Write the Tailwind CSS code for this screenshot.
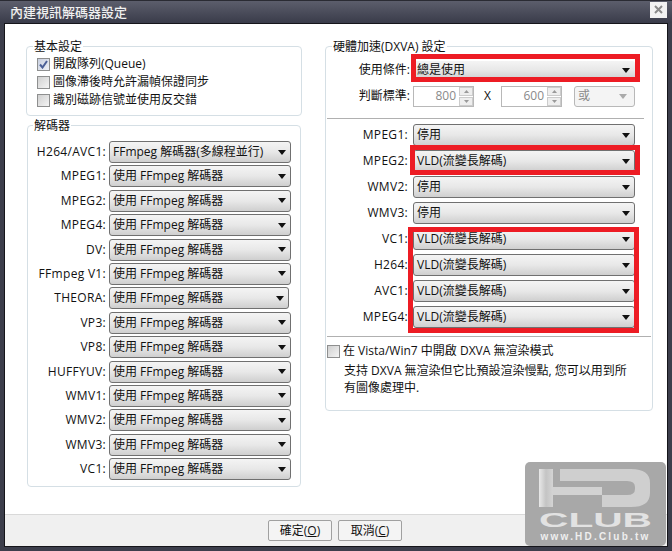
<!DOCTYPE html>
<html><head><meta charset="utf-8">
<script src="https://cdn.jsdelivr.net/npm/@tailwindcss/browser@4"></script>
</head>
<body class="w-[672px] h-[551px] overflow-hidden bg-[#3c3e4b]">
<div class="relative w-[672px] h-[551px] flex flex-col font-['Open_Sans','Noto_Sans_CJK_TC',sans-serif] text-[12px] leading-[16px] text-[#111]">
  <!-- title -->
  <div class="h-[23px] shrink-0 flex items-center justify-between pl-[10px] pr-[5px] bg-gradient-to-b from-[#5c5e6c] to-[#3a3c4a] text-[13px] font-medium text-[#f0f0f0] border-t border-[#2a2b33]">
    <span>內建視訊解碼器設定</span>
    <div class="w-[17px] h-[16px] bg-[#f2f2f2] flex items-center justify-center -mt-[5px]">
      <svg width="9" height="9" viewBox="0 0 9 9"><path d="M1 1l7 7M8 1l-7 7" stroke="#8a8a8a" stroke-width="2"/></svg>
    </div>
  </div>
  <!-- client -->
  <div class="mx-[4px] mb-[4px] flex-1 flex flex-col border border-[#15151a] min-h-0">
    <div class="flex-1 bg-white flex pl-[21px] pt-[14px] gap-[23px] border-b border-[#d9d9d9] min-h-0">
      <!-- left -->
      <div class="w-[276px] flex flex-col gap-[1px]">
        <fieldset class="border border-[#d5dfe5] rounded-[4px] h-[78px] px-[10px] pt-[1px]">
          <legend class="-ml-[4px] px-[1px] text-[12px] translate-y-[1px]">基本設定</legend>
          <div class="flex items-center gap-[3px] h-[18px]"><span class="w-[13px] h-[13px] border border-[#8e8f8f] bg-gradient-to-br from-[#c8cfe0] to-[#eef0f6] flex items-center justify-center"><svg width="9" height="9" viewBox="0 0 9 9"><path d="M1 4.500l2.500 3L8 1" fill="none" stroke="#4a5f97" stroke-width="2"/></svg></span>開啟隊列(Queue)</div>
          <div class="flex items-center gap-[3px] h-[18px]"><span class="w-[13px] h-[13px] border border-[#8e8f8f] bg-gradient-to-br from-[#d0d0d0] to-[#f4f4f4]"></span>圖像滯後時允許漏幀保證同步</div>
          <div class="flex items-center gap-[3px] h-[18px]"><span class="w-[13px] h-[13px] border border-[#8e8f8f] bg-gradient-to-br from-[#d0d0d0] to-[#f4f4f4]"></span>識別磁跡信號並使用反交錯</div>
        </fieldset>
        <fieldset class="border border-[#d5dfe5] rounded-[4px] w-[274px] ml-[1px] h-[370px] pl-[6px]">
          <legend class="-ml-[1px] px-[1px] text-[12px] translate-y-[1px]">解碼器</legend>
          <div class="flex flex-col gap-[2.4px] mt-[8px]">
            <div class="flex items-center h-[22px]"><span class="w-[75px] text-right pr-[3px] whitespace-nowrap tracking-[0.3px]">H264/AVC1:</span><div class="w-[182px] h-[22px] shrink-0 flex items-center justify-between px-[3px] border border-[#707070] rounded-[3px] bg-gradient-to-b from-[#f4f4f4] via-[#e8e8e8] to-[#cfcfcf]"><span>FFmpeg 解碼器(多線程並行)</span><svg width="9" height="5"><path d="M0 0h8l-4 5z" fill="#111"/></svg></div></div>
            <div class="flex items-center h-[22px]"><span class="w-[75px] text-right pr-[3px] whitespace-nowrap tracking-[0.3px]">MPEG1:</span><div class="w-[182px] h-[22px] shrink-0 flex items-center justify-between px-[3px] border border-[#707070] rounded-[3px] bg-gradient-to-b from-[#f4f4f4] via-[#e8e8e8] to-[#cfcfcf]"><span>使用 FFmpeg 解碼器</span><svg width="9" height="5"><path d="M0 0h8l-4 5z" fill="#111"/></svg></div></div>
            <div class="flex items-center h-[22px]"><span class="w-[75px] text-right pr-[3px] whitespace-nowrap tracking-[0.3px]">MPEG2:</span><div class="w-[182px] h-[22px] shrink-0 flex items-center justify-between px-[3px] border border-[#707070] rounded-[3px] bg-gradient-to-b from-[#f4f4f4] via-[#e8e8e8] to-[#cfcfcf]"><span>使用 FFmpeg 解碼器</span><svg width="9" height="5"><path d="M0 0h8l-4 5z" fill="#111"/></svg></div></div>
            <div class="flex items-center h-[22px]"><span class="w-[75px] text-right pr-[3px] whitespace-nowrap tracking-[0.3px]">MPEG4:</span><div class="w-[182px] h-[22px] shrink-0 flex items-center justify-between px-[3px] border border-[#707070] rounded-[3px] bg-gradient-to-b from-[#f4f4f4] via-[#e8e8e8] to-[#cfcfcf]"><span>使用 FFmpeg 解碼器</span><svg width="9" height="5"><path d="M0 0h8l-4 5z" fill="#111"/></svg></div></div>
            <div class="flex items-center h-[22px]"><span class="w-[75px] text-right pr-[3px] whitespace-nowrap tracking-[0.3px]">DV:</span><div class="w-[182px] h-[22px] shrink-0 flex items-center justify-between px-[3px] border border-[#707070] rounded-[3px] bg-gradient-to-b from-[#f4f4f4] via-[#e8e8e8] to-[#cfcfcf]"><span>使用 FFmpeg 解碼器</span><svg width="9" height="5"><path d="M0 0h8l-4 5z" fill="#111"/></svg></div></div>
            <div class="flex items-center h-[22px]"><span class="w-[75px] text-right pr-[3px] whitespace-nowrap tracking-[0.3px]">FFmpeg V1:</span><div class="w-[182px] h-[22px] shrink-0 flex items-center justify-between px-[3px] border border-[#707070] rounded-[3px] bg-gradient-to-b from-[#f4f4f4] via-[#e8e8e8] to-[#cfcfcf]"><span>使用 FFmpeg 解碼器</span><svg width="9" height="5"><path d="M0 0h8l-4 5z" fill="#111"/></svg></div></div>
            <div class="flex items-center h-[22px]"><span class="w-[75px] text-right pr-[3px] whitespace-nowrap tracking-[0.3px]">THEORA:</span><div class="w-[180px] h-[22px] shrink-0 flex items-center justify-between px-[3px] border border-[#707070] rounded-[3px] bg-gradient-to-b from-[#f4f4f4] via-[#e8e8e8] to-[#cfcfcf]"><span>使用 FFmpeg 解碼器</span><svg width="9" height="5"><path d="M0 0h8l-4 5z" fill="#111"/></svg></div></div>
            <div class="flex items-center h-[22px]"><span class="w-[75px] text-right pr-[3px] whitespace-nowrap tracking-[0.3px]">VP3:</span><div class="w-[182px] h-[22px] shrink-0 flex items-center justify-between px-[3px] border border-[#707070] rounded-[3px] bg-gradient-to-b from-[#f4f4f4] via-[#e8e8e8] to-[#cfcfcf]"><span>使用 FFmpeg 解碼器</span><svg width="9" height="5"><path d="M0 0h8l-4 5z" fill="#111"/></svg></div></div>
            <div class="flex items-center h-[22px]"><span class="w-[75px] text-right pr-[3px] whitespace-nowrap tracking-[0.3px]">VP8:</span><div class="w-[182px] h-[22px] shrink-0 flex items-center justify-between px-[3px] border border-[#707070] rounded-[3px] bg-gradient-to-b from-[#f4f4f4] via-[#e8e8e8] to-[#cfcfcf]"><span>使用 FFmpeg 解碼器</span><svg width="9" height="5"><path d="M0 0h8l-4 5z" fill="#111"/></svg></div></div>
            <div class="flex items-center h-[22px]"><span class="w-[75px] text-right pr-[3px] whitespace-nowrap tracking-[0.3px]">HUFFYUV:</span><div class="w-[182px] h-[22px] shrink-0 flex items-center justify-between px-[3px] border border-[#707070] rounded-[3px] bg-gradient-to-b from-[#f4f4f4] via-[#e8e8e8] to-[#cfcfcf]"><span>使用 FFmpeg 解碼器</span><svg width="9" height="5"><path d="M0 0h8l-4 5z" fill="#111"/></svg></div></div>
            <div class="flex items-center h-[22px]"><span class="w-[75px] text-right pr-[3px] whitespace-nowrap tracking-[0.3px]">WMV1:</span><div class="w-[182px] h-[22px] shrink-0 flex items-center justify-between px-[3px] border border-[#707070] rounded-[3px] bg-gradient-to-b from-[#f4f4f4] via-[#e8e8e8] to-[#cfcfcf]"><span>使用 FFmpeg 解碼器</span><svg width="9" height="5"><path d="M0 0h8l-4 5z" fill="#111"/></svg></div></div>
            <div class="flex items-center h-[22px]"><span class="w-[75px] text-right pr-[3px] whitespace-nowrap tracking-[0.3px]">WMV2:</span><div class="w-[182px] h-[22px] shrink-0 flex items-center justify-between px-[3px] border border-[#707070] rounded-[3px] bg-gradient-to-b from-[#f4f4f4] via-[#e8e8e8] to-[#cfcfcf]"><span>使用 FFmpeg 解碼器</span><svg width="9" height="5"><path d="M0 0h8l-4 5z" fill="#111"/></svg></div></div>
            <div class="flex items-center h-[22px]"><span class="w-[75px] text-right pr-[3px] whitespace-nowrap tracking-[0.3px]">WMV3:</span><div class="w-[182px] h-[22px] shrink-0 flex items-center justify-between px-[3px] border border-[#707070] rounded-[3px] bg-gradient-to-b from-[#f4f4f4] via-[#e8e8e8] to-[#cfcfcf]"><span>使用 FFmpeg 解碼器</span><svg width="9" height="5"><path d="M0 0h8l-4 5z" fill="#111"/></svg></div></div>
            <div class="flex items-center h-[22px]"><span class="w-[75px] text-right pr-[3px] whitespace-nowrap tracking-[0.3px]">VC1:</span><div class="w-[182px] h-[22px] shrink-0 flex items-center justify-between px-[3px] border border-[#707070] rounded-[3px] bg-gradient-to-b from-[#f4f4f4] via-[#e8e8e8] to-[#cfcfcf]"><span>使用 FFmpeg 解碼器</span><svg width="9" height="5"><path d="M0 0h8l-4 5z" fill="#111"/></svg></div></div>
          </div>
        </fieldset>
      </div>
      <!-- right -->
      <fieldset class="border border-[#d5dfe5] rounded-[4px] w-[328px] h-[373px] px-[1px]">
        <legend class="ml-[5px] px-[1px] text-[12px] translate-y-[1px]">硬體加速(DXVA) 設定</legend>
        <div class="flex items-center h-[18px] mt-[7px]"><span class="w-[86px] text-right pr-[3px] whitespace-nowrap">使用條件:</span><div class="w-[222px] h-[18px] shrink-0 flex items-center justify-between px-[4px] rounded-[3px] bg-gradient-to-b from-[#f4f4f4] via-[#e8e8e8] to-[#cfcfcf]"><span>總是使用</span><svg width="9" height="5"><path d="M0 0h8l-4 5z" fill="#111"/></svg></div></div>
        <div class="flex items-center h-[22px] mt-[6px]"><span class="w-[86px] text-right pr-[3px] whitespace-nowrap">判斷標準:</span>
          <div class="w-[61px] h-[21px] shrink-0 flex items-center justify-end border border-[#b8b8b8] text-[#8a8a8a]"><span class="mr-[3px]">800</span><div class="w-[14px] h-[19px] flex flex-col gap-[1px]"><div class="flex-1 bg-[#eee] border border-[#ccc] flex items-center justify-center"><svg width="5" height="3"><path d="M0 3h5L2.500 0z" fill="#999"/></svg></div><div class="flex-1 bg-[#eee] border border-[#ccc] flex items-center justify-center"><svg width="5" height="3"><path d="M0 0h5L2.500 3z" fill="#999"/></svg></div></div></div>
          <span class="w-[27px] text-center">X</span>
          <div class="w-[61px] h-[21px] shrink-0 flex items-center justify-end border border-[#b8b8b8] text-[#8a8a8a]"><span class="mr-[3px]">600</span><div class="w-[14px] h-[19px] flex flex-col gap-[1px]"><div class="flex-1 bg-[#eee] border border-[#ccc] flex items-center justify-center"><svg width="5" height="3"><path d="M0 3h5L2.500 0z" fill="#999"/></svg></div><div class="flex-1 bg-[#eee] border border-[#ccc] flex items-center justify-center"><svg width="5" height="3"><path d="M0 0h5L2.500 3z" fill="#999"/></svg></div></div></div>
          <div class="ml-[12px] w-[61px] h-[21px] shrink-0 flex items-center justify-between pl-[3px] pr-[7px] border border-[#b8b8b8] rounded-[3px] bg-[#f4f4f4] text-[#8a8a8a]"><span>或</span><svg width="8" height="5"><path d="M0 0h8l-4 5z" fill="#aaa"/></svg></div>
        </div>
        <div class="h-px bg-[#b0b0b0] mt-[11px] mb-[5px] w-[317px]"></div>
        <div class="flex flex-col gap-[4px]">
          <div class="flex items-center h-[22px]"><span class="w-[86px] text-right pr-[5px] whitespace-nowrap tracking-[0.3px]">MPEG1:</span><div class="w-[222px] h-[22px] shrink-0 flex items-center justify-between px-[3px] border border-[#707070] rounded-[3px] bg-gradient-to-b from-[#f4f4f4] via-[#e8e8e8] to-[#cfcfcf]"><span>停用</span><svg width="9" height="5"><path d="M0 0h8l-4 5z" fill="#111"/></svg></div></div>
          <div class="flex items-center h-[22px]"><span class="w-[86px] text-right pr-[5px] whitespace-nowrap tracking-[0.3px]">MPEG2:</span><div class="w-[222px] h-[22px] shrink-0 flex items-center justify-between px-[3px] border border-[#707070] rounded-[3px] bg-gradient-to-b from-[#f4f4f4] via-[#e8e8e8] to-[#cfcfcf]"><span>VLD(流變長解碼)</span><svg width="9" height="5"><path d="M0 0h8l-4 5z" fill="#111"/></svg></div></div>
          <div class="flex items-center h-[22px]"><span class="w-[86px] text-right pr-[5px] whitespace-nowrap tracking-[0.3px]">WMV2:</span><div class="w-[222px] h-[22px] shrink-0 flex items-center justify-between px-[3px] border border-[#707070] rounded-[3px] bg-gradient-to-b from-[#f4f4f4] via-[#e8e8e8] to-[#cfcfcf]"><span>停用</span><svg width="9" height="5"><path d="M0 0h8l-4 5z" fill="#111"/></svg></div></div>
          <div class="flex items-center h-[22px]"><span class="w-[86px] text-right pr-[5px] whitespace-nowrap tracking-[0.3px]">WMV3:</span><div class="w-[222px] h-[22px] shrink-0 flex items-center justify-between px-[3px] border border-[#707070] rounded-[3px] bg-gradient-to-b from-[#f4f4f4] via-[#e8e8e8] to-[#cfcfcf]"><span>停用</span><svg width="9" height="5"><path d="M0 0h8l-4 5z" fill="#111"/></svg></div></div>
          <div class="flex items-center h-[22px]"><span class="w-[86px] text-right pr-[5px] whitespace-nowrap tracking-[0.3px]">VC1:</span><div class="w-[222px] h-[22px] shrink-0 flex items-center justify-between px-[3px] border border-[#707070] rounded-[3px] bg-gradient-to-b from-[#f4f4f4] via-[#e8e8e8] to-[#cfcfcf]"><span>VLD(流變長解碼)</span><svg width="9" height="5"><path d="M0 0h8l-4 5z" fill="#111"/></svg></div></div>
          <div class="flex items-center h-[22px]"><span class="w-[86px] text-right pr-[5px] whitespace-nowrap tracking-[0.3px]">H264:</span><div class="w-[222px] h-[22px] shrink-0 flex items-center justify-between px-[3px] border border-[#707070] rounded-[3px] bg-gradient-to-b from-[#f4f4f4] via-[#e8e8e8] to-[#cfcfcf]"><span>VLD(流變長解碼)</span><svg width="9" height="5"><path d="M0 0h8l-4 5z" fill="#111"/></svg></div></div>
          <div class="flex items-center h-[22px]"><span class="w-[86px] text-right pr-[5px] whitespace-nowrap tracking-[0.3px]">AVC1:</span><div class="w-[222px] h-[22px] shrink-0 flex items-center justify-between px-[3px] border border-[#707070] rounded-[3px] bg-gradient-to-b from-[#f4f4f4] via-[#e8e8e8] to-[#cfcfcf]"><span>VLD(流變長解碼)</span><svg width="9" height="5"><path d="M0 0h8l-4 5z" fill="#111"/></svg></div></div>
          <div class="flex items-center h-[22px]"><span class="w-[86px] text-right pr-[5px] whitespace-nowrap tracking-[0.3px]">MPEG4:</span><div class="w-[222px] h-[22px] shrink-0 flex items-center justify-between px-[3px] border border-[#707070] rounded-[3px] bg-gradient-to-b from-[#f4f4f4] via-[#e8e8e8] to-[#cfcfcf]"><span>VLD(流變長解碼)</span><svg width="9" height="5"><path d="M0 0h8l-4 5z" fill="#111"/></svg></div></div>
        </div>
        <div class="h-px bg-[#b0b0b0] mt-[8px] mb-[7px]"></div>
        <div class="flex items-center gap-[3px] h-[14px]"><span class="w-[13px] h-[13px] border border-[#8e8f8f] bg-gradient-to-br from-[#d0d0d0] to-[#f4f4f4]"></span>在 Vista/Win7 中開啟 DXVA 無渲染模式</div>
        <p class="ml-[17px] mt-[4px] w-[290px] leading-[17px]">支持 DXVA 無渲染但它比預設渲染慢點, 您可以用到所有圖像處理中.</p>
      </fieldset>
    </div>
    <div class="h-[31px] shrink-0 bg-[#f0f0f0] flex items-center pl-[263px] gap-[6px]">
      <div class="w-[64px] h-[21px] border border-[#a0a0a0] rounded-[2px] bg-[#f4f4f4] flex items-center justify-center">確定(<u>O</u>)</div>
      <div class="w-[64px] h-[21px] border border-[#a0a0a0] rounded-[2px] bg-[#f4f4f4] flex items-center justify-center">取消(<u>C</u>)</div>
    </div>
  </div>
  <!-- red annotations -->
  <div class="absolute left-[411px] top-[54px] w-[229px] h-[28px] border-[5px] border-[#ed1c24]"></div>
  <div class="absolute left-[410px] top-[145px] w-[230px] h-[30px] border-[5px] border-[#ed1c24]"></div>
  <div class="absolute left-[408px] top-[227px] w-[231px] h-[106px] border-[5px] border-[#ed1c24]"></div>
  <!-- watermark -->
  <div class="absolute left-[525px] top-[462px] w-[141px] h-[84px] rounded-[5px] bg-[#a8a8a8] flex flex-col items-center">
    <svg width="114" height="64" viewBox="0 0 114 64" class="mt-[7px]"><defs><linearGradient id="g" x1="0" x2="1"><stop offset="0" stop-color="#e8e8e8"/><stop offset="0.5" stop-color="#c4c4c4"/><stop offset="1" stop-color="#d4d4d4"/></linearGradient></defs><rect x="0" y="0" width="14" height="38" fill="url(#g)"/><rect x="14" y="18" width="49" height="8" fill="#d2d2d2"/><path d="M21 0H92Q111 0 111 14V24Q111 38 92 38H63V26H88Q96 26 96 20V18Q96 12 88 12H21z" fill="#cfcfcf"/><text x="0" y="58" textLength="113" lengthAdjust="spacingAndGlyphs" font-family="Liberation Sans" font-size="21" font-weight="700" fill="#e2e2e2">CLUB</text></svg>
    <span class="font-['Liberation_Sans'] font-bold text-[10px] leading-[11px] tracking-[2.2px] text-[#eee] -mt-[2px] whitespace-nowrap">www.HD.Club.tw</span>
  </div>
</div>
</body></html>
